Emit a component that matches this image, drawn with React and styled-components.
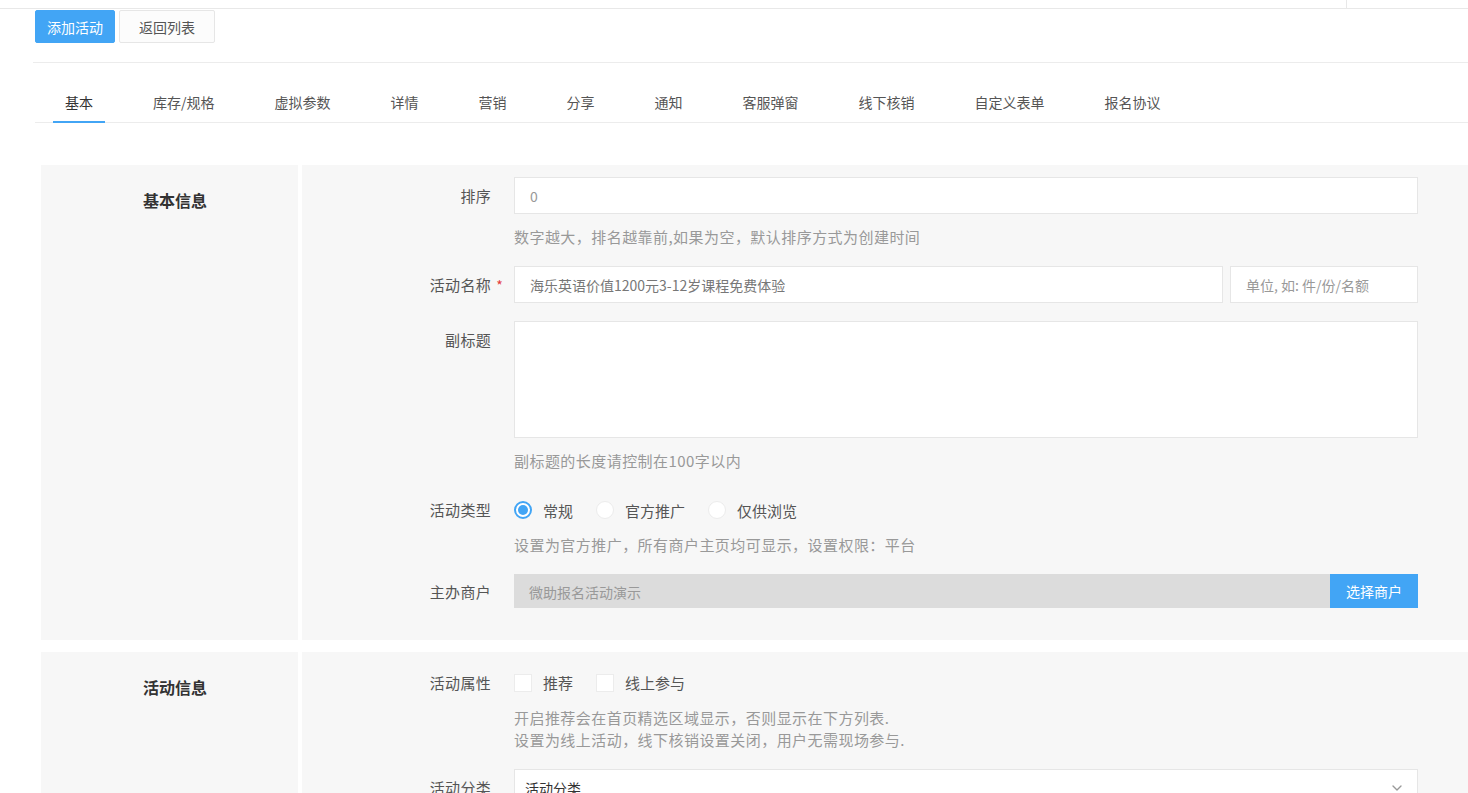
import React from 'react';
import styled, { createGlobalStyle } from 'styled-components';
import { ChevronDown } from 'lucide-react';

const blue = '#42a5f5';

const GlobalStyle = createGlobalStyle`
  html, body {
    margin: 0;
    padding: 0;
    background: #fff;
    font-family: "Noto Sans CJK SC", "Microsoft YaHei", "Noto Sans", sans-serif;
    color: #555;
  }
  * {
    box-sizing: border-box;
  }
`;

const TopStrip = styled.div`
  height: 9px;
  border-bottom: 1px solid #e8e8e8;
  display: flex;
  justify-content: flex-end;
`;

const TopDivider = styled.div`
  width: 122px;
  border-left: 1px solid #e8e8e8;
`;

const Page = styled.div`
  padding-left: 33px;
`;

const Toolbar = styled.div`
  display: flex;
  gap: 4px;
  padding: 1px 0 19px 2px;
  border-bottom: 1px solid #ececec;
`;

const Button = styled.button`
  height: 33px;
  padding: 0 ${p => (p.primary ? 11 : 19)}px;
  font-family: inherit;
  font-size: 14px;
  border-radius: 2px;
  border: 1px solid ${p => (p.primary ? blue : '#e6e6e6')};
  background: ${p => (p.primary ? blue : '#fcfcfc')};
  color: ${p => (p.primary ? '#fff' : '#555')};
  cursor: pointer;
`;

const TabBar = styled.div`
  display: flex;
  padding-left: 18px;
  margin-left: 2px;
  border-bottom: 1px solid #ececec;
`;

const Tab = styled.div`
  height: 60px;
  padding: 28px 12px 0;
  line-height: 22px;
  margin-right: 36px;
  font-size: 14px;
  color: ${p => (p.active ? '#333' : '#555')};
  border-bottom: 2px solid ${p => (p.active ? blue : 'transparent')};
  margin-bottom: -1px;
`;

const Sections = styled.div`
  padding: 42px 0 0 8px;
  display: flex;
  flex-direction: column;
  gap: 12px;
`;

const Section = styled.section`
  display: flex;
  gap: 4px;
`;

const SectionTitle = styled.div`
  width: 257px;
  flex-shrink: 0;
  background: #f7f7f7;
  padding: 24px 0 0 102px;
  font-size: 16px;
  line-height: 22px;
  font-weight: bold;
  color: #333;
`;

const SectionBody = styled.div`
  flex: 1;
  background: #f7f7f7;
  padding: 12px 50px 30px 0;
`;

const Field = styled.div`
  display: flex;
  & + & {
    margin-top: 18px;
  }
`;

const Label = styled.div`
  position: relative;
  width: 189px;
  flex-shrink: 0;
  margin-right: 23px;
  text-align: right;
  font-size: 15px;
  letter-spacing: 0.3px;
  line-height: ${p => p.h || 37}px;
  color: #555;
`;

const Required = styled.span`
  position: absolute;
  right: -12px;
  top: 1px;
  color: #e4393c;
  font-size: 14px;
`;

const Control = styled.div`
  flex: 1;
  min-width: 0;
`;

const InputRow = styled.div`
  display: flex;
  gap: 7px;
`;

const Input = styled.div`
  flex: ${p => (p.width ? `0 0 ${p.width}px` : 1)};
  height: 37px;
  line-height: 37px;
  background: #fff;
  border: 1px solid #e6e6e6;
  padding: 0 15px;
  font-size: 14px;
  color: ${p => p.color || '#999'};
`;

const TextArea = styled.div`
  height: 117px;
  background: #fff;
  border: 1px solid #e6e6e6;
`;

const Help = styled.div`
  margin-top: ${p => p.top ?? 12}px;
  font-size: 15px;
  letter-spacing: 0.45px;
  line-height: 22px;
  color: #999;
`;

const Choices = styled.div`
  height: ${p => p.h || 37}px;
  display: flex;
  align-items: center;
  gap: 23px;
  font-size: 15px;
  color: #555;
`;

const Choice = styled.label`
  display: flex;
  align-items: center;
  gap: 11px;
`;

const RadioDot = styled.span`
  width: 18px;
  height: 18px;
  border-radius: 50%;
  background: #fff;
  border: ${p => (p.checked ? `2px solid ${blue}` : '1px solid #ececec')};
  display: flex;
  align-items: center;
  justify-content: center;
  &::after {
    content: '';
    width: 10px;
    height: 10px;
    border-radius: 50%;
    background: ${p => (p.checked ? blue : 'transparent')};
  }
`;

const CheckBox = styled.span`
  width: 18px;
  height: 18px;
  background: #fff;
  border: 1px solid #ececec;
`;

const Picker = styled.div`
  display: flex;
  height: 34px;
`;

const PickerValue = styled.div`
  flex: 1;
  background: #dcdcdc;
  padding: 0 15px;
  line-height: 36px;
  font-size: 14px;
  color: #999;
`;

const PickerButton = styled.div`
  width: 88px;
  background: ${blue};
  color: #fff;
  font-size: 14px;
  line-height: 34px;
  text-align: center;
`;

const Select = styled.div`
  height: 37px;
  background: #fff;
  border: 1px solid #e6e6e6;
  display: flex;
  align-items: center;
  justify-content: space-between;
  padding: 0 12px 0 10px;
  font-size: 14px;
  color: #333;
`;

const tabs = ['基本', '库存/规格', '虚拟参数', '详情', '营销', '分享', '通知', '客服弹窗', '线下核销', '自定义表单', '报名协议'];

const Radio = ({ checked, children }) => (
  <Choice>
    <RadioDot checked={checked} />
    {children}
  </Choice>
);

const Check = ({ children }) => (
  <Choice>
    <CheckBox />
    {children}
  </Choice>
);

export default function App() {
  return (
    <>
      <GlobalStyle />
      <TopStrip>
        <TopDivider />
      </TopStrip>
      <Page>
        <Toolbar>
          <Button primary>添加活动</Button>
          <Button>返回列表</Button>
        </Toolbar>
        <TabBar>
          {tabs.map((t, i) => (
            <Tab key={t} active={i === 0}>{t}</Tab>
          ))}
        </TabBar>
        <Sections>
          <Section>
            <SectionTitle>基本信息</SectionTitle>
            <SectionBody>
              <Field>
                <Label>排序</Label>
                <Control>
                  <Input>0</Input>
                  <Help>数字越大，排名越靠前,如果为空，默认排序方式为创建时间</Help>
                </Control>
              </Field>
              <Field>
                <Label>
                  活动名称<Required>*</Required>
                </Label>
                <Control>
                  <InputRow>
                    <Input color="#777">海乐英语价值1200元3-12岁课程免费体验</Input>
                    <Input width={188}>单位, 如: 件/份/名额</Input>
                  </InputRow>
                </Control>
              </Field>
              <Field>
                <Label>副标题</Label>
                <Control>
                  <TextArea />
                  <Help>副标题的长度请控制在100字以内</Help>
                </Control>
              </Field>
              <Field>
                <Label h={40}>活动类型</Label>
                <Control>
                  <Choices h={40}>
                    <Radio checked>常规</Radio>
                    <Radio>官方推广</Radio>
                    <Radio>仅供浏览</Radio>
                  </Choices>
                  <Help top={4}>设置为官方推广，所有商户主页均可显示，设置权限：平台</Help>
                </Control>
              </Field>
              <Field>
                <Label h={36}>主办商户</Label>
                <Control>
                  <Picker>
                    <PickerValue>微助报名活动演示</PickerValue>
                    <PickerButton>选择商户</PickerButton>
                  </Picker>
                </Control>
              </Field>
            </SectionBody>
          </Section>
          <Section>
            <SectionTitle>活动信息</SectionTitle>
            <SectionBody>
              <Field>
                <Label>活动属性</Label>
                <Control>
                  <Choices>
                    <Check>推荐</Check>
                    <Check>线上参与</Check>
                  </Choices>
                  <Help top={6}>
                    开启推荐会在首页精选区域显示，否则显示在下方列表.
                    <br />
                    设置为线上活动，线下核销设置关闭，用户无需现场参与.
                  </Help>
                </Control>
              </Field>
              <Field>
                <Label>活动分类</Label>
                <Control>
                  <Select>
                    活动分类
                    <ChevronDown size={16} color="#999" />
                  </Select>
                </Control>
              </Field>
            </SectionBody>
          </Section>
        </Sections>
      </Page>
    </>
  );
}
